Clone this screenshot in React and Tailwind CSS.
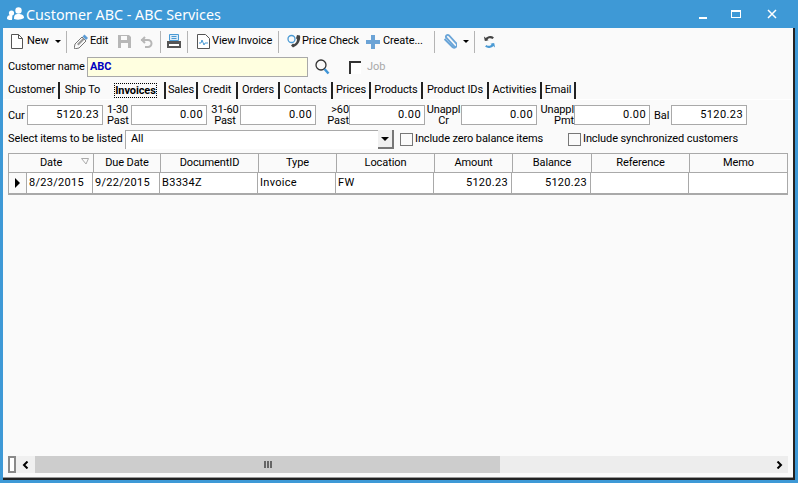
const columns = [
  { name: "Date", width: "w-[85px]" },
  { name: "Due Date", width: "w-[67px]" },
  { name: "DocumentID", width: "w-[98px]" },
  { name: "Type", width: "w-[78px]" },
  { name: "Location", width: "w-[98px]" },
  { name: "Amount", width: "w-[78px]" },
  { name: "Balance", width: "w-[79px]" },
  { name: "Reference", width: "w-[98px]" },
  { name: "Memo", width: "flex-1" },
];

const tabs = [
  { name: "Customer", width: "w-[55px]" },
  { name: "Ship To", width: "w-[47px]", noSep: true },
  { name: "Invoices", width: "w-[59px]", active: true },
  { name: "Sales", width: "w-[32px]" },
  { name: "Credit", width: "w-[40px]" },
  { name: "Orders", width: "w-[42px]" },
  { name: "Contacts", width: "w-[53px]" },
  { name: "Prices", width: "w-[38px]" },
  { name: "Products", width: "w-[52px]" },
  { name: "Product IDs", width: "w-[66px]" },
  { name: "Activities", width: "w-[53px]" },
  { name: "Email", width: "w-[34px]" },
];

function Sep() {
  return <div className="h-[22px] w-px bg-[#b4b4b4]" />;
}

function Caret() {
  return <div className="h-0 w-0 border-x-[3px] border-t-[3px] border-x-transparent border-t-black" />;
}

function Amount({ label, value, labelWidth, gap, align = "text-right" }) {
  return (
    <>
      <div className={`${labelWidth} ${gap} ${align} shrink-0 leading-[11px]`}>{label}</div>
      <div className="flex h-[20px] w-[76px] shrink-0 items-center justify-end border border-[#a9a9a9] bg-white pr-[3px] tracking-[0.4px]">{value}</div>
    </>
  );
}

function Tab({ tab }) {
  return (
    <div className={`${tab.width} flex h-[17px] items-center justify-center border-r-2 ${tab.noSep ? "border-transparent" : "border-[#222]"} ${tab.active ? "font-bold" : ""}`}>
      <span className={tab.active ? "border border-dotted border-black leading-[13px]" : ""}>{tab.name}</span>
    </div>
  );
}

export default function App() {
  return (
    <div className="flex h-[483px] w-[798px] flex-col overflow-hidden whitespace-nowrap bg-[#3e99d6] font-['Roboto',sans-serif] text-[11px] tracking-[-0.1px] text-black">
      {/* title bar */}
      <div className="flex h-[28px] shrink-0 items-center pl-[7px] text-white">
        <svg width="18" height="14" viewBox="0 0 18 14" fill="white">
          <circle cx="11.500" cy="3.500" r="3.200" />
          <path d="M7 12c0-4 1-5 4.500-5s5.500 1 5.500 4c-3 2-7 2-10 1z" />
          <circle cx="4.500" cy="6" r="2.600" />
          <path d="M0 12c0-3 1-4 4.500-4 1 0 1 1 .5 5-2 0-4 0-5-1z" />
        </svg>
        <div className="ml-[1px] mt-[2px] font-['Noto_Sans',sans-serif] text-[14.300px] tracking-normal">Customer ABC - ABC Services</div>
        <div className="ml-auto flex items-center">
          <div className="h-[2px] w-[8px] translate-y-[4px] bg-white" />
          <div className="ml-[24px] h-[8px] w-[10px] border border-t-2 border-white" />
          <svg className="ml-[25px] mr-[20px]" width="12" height="10" viewBox="0 0 12 10" fill="none" stroke="white" strokeWidth="1.500"><path d="M2 1l8 8M10 1L2 9" /></svg>
        </div>
      </div>

      <div className="mx-[3px] mb-[3px] flex flex-1 flex-col border-b-2 border-r-2 border-[#222] bg-[#fafafa]">
        {/* toolbar */}
        <div className="flex h-[27px] shrink-0 items-center pl-[8px]">
          <svg width="12" height="15" viewBox="0 0 12 15" fill="none" stroke="#555"><path d="M.5.500h7l4 4v10h-11z" fill="white" /><path d="M7.500.5v4h4" /></svg>
          <span className="ml-[4px] w-[22px]">New</span>
          <div className="ml-[6px]"><Caret /></div>
          <div className="ml-[5px]"><Sep /></div>
          <svg className="ml-[7px]" width="14" height="15" viewBox="0 0 14 15"><path d="M0 15l1-5 7-7 4 4-7 7z" fill="#fafafa" stroke="#777" /><path d="M3 10l6-6 1.500 1.500-6 6z" fill="#999" /><path d="M8.500 2.500l2-2 3.500 3.500-2 2z" fill="#5b9bd5" /></svg>
          <span className="ml-[2px] w-[19px]">Edit</span>
          <svg className="ml-[9px]" width="13" height="13" viewBox="0 0 13 13"><path d="M0 0h11l2 2v11H0z" fill="#b7b7b7" /><path d="M3 1h6v4H3zM3 8h7v5H3z" fill="#fafafa" /></svg>
          <svg className="ml-[9px]" width="13" height="12" viewBox="0 0 13 12" fill="none" stroke="#b7b7b7" strokeWidth="2"><path d="M1 4h7a3.500 3.500 0 010 7H5" /><path d="M5 1L2 4l3 3" /></svg>
          <div className="ml-[7px]"><Sep /></div>
          <svg className="ml-[6px]" width="14" height="15" viewBox="0 0 14 15"><path d="M2.500.500h9v6h-9z" fill="#dcecf8" stroke="#4a9ad4" /><path d="M4.500 2h5v1h-5zM4.500 4h5v1h-5z" fill="#4a9ad4" /><path d="M0 7h14v7H0z" fill="#555" /><path d="M2 10h10v2H2z" fill="white" /></svg>
          <div className="ml-[6px]"><Sep /></div>
          <svg className="ml-[9px]" width="13" height="15" viewBox="0 0 13 15" fill="none" stroke="#555"><path d="M.5.500h8l4 4v10h-12z" fill="white" /><path d="M2 9h2l1-3 2 5 1-2h3" stroke="#4a9ad4" /></svg>
          <span className="ml-[2px] w-[60px]">View Invoice</span>
          <div className="ml-[6px]"><Sep /></div>
          <svg className="ml-[8px]" width="15" height="15" viewBox="0 0 15 15" fill="none"><circle cx="4.500" cy="5" r="3.500" stroke="#4a9ad4" strokeWidth="1.300" /><path d="M10 1l3 .5c1 5-2 10-7 12l-2-2 2-2 1 .8c2-1 3-3 3-5l-1-1z" fill="#444" /></svg>
          <span className="w-[57px]">Price Check</span>
          <svg className="ml-[7px]" width="14" height="14" viewBox="0 0 14 14"><path d="M5 0h4v5h5v4H9v5H5V9H0V5h5z" fill="#6ba3d6" /></svg>
          <span className="ml-[3px] w-[45px]">Create...</span>
          <div className="ml-[6px]"><Sep /></div>
          <svg className="ml-[8px]" width="14" height="15" viewBox="0 0 14 15" fill="none" stroke="#6aa5d8" strokeWidth="1.800"><path d="M12 13L3.500 4a1.700 1.700 0 012.500-2.500l7 7.500a2.500 2.500 0 01-3.500 4L1.500 5" /></svg>
          <div className="ml-[6px]"><Caret /></div>
          <div className="ml-[5px]"><Sep /></div>
          <svg className="ml-[8px]" width="13" height="14" viewBox="0 0 14 14" fill="none" strokeWidth="2.400"><path d="M11 3a5 5 0 00-8 2" stroke="#444" /><path d="M3 11a5 5 0 008-2" stroke="#4a9ad4" /><path d="M1 1l1 5 4-1z" fill="#444" stroke="none" /><path d="M13 13l-1-5-4 1z" fill="#4a9ad4" stroke="none" /></svg>
        </div>

        {/* customer name */}
        <div className="flex h-[24px] shrink-0 items-center pl-[5px]">
          <span className="w-[79px]">Customer name</span>
          <div className="flex h-[20px] w-[221px] items-center border border-[#a9a9a9] bg-[#ffffe0] pl-[2px] font-bold text-[#0000c0]">ABC</div>
          <svg className="ml-[7px]" width="15" height="16" viewBox="0 0 15 16" fill="none"><circle cx="6" cy="6" r="5" stroke="#333" strokeWidth="1.300" /><path d="M9.500 10l4 4.500" stroke="#3f94d6" strokeWidth="2.500" /></svg>
          <div className="ml-[19px] h-[13px] w-[12px] border-l-2 border-t-2 border-[#333] bg-white" />
          <span className="ml-[6px] text-[#a8a8a8]">Job</span>
        </div>

        {/* tabs */}
        <div className="flex h-[21px] shrink-0 items-end border-b border-white pl-[2px]">
          {tabs.map((t) => <Tab key={t.name} tab={t} />)}
        </div>

        {/* amounts */}
        <div className="flex h-[30px] shrink-0 items-center pl-[5px]">
          <Amount label="Cur" value="5120.23" labelWidth="w-[19px]" align="text-left" />
          <Amount label={<>1-30<br />Past</>} value="0.00" labelWidth="w-[24px]" gap="ml-[4px]" align="text-left" />
          <Amount label={<>31-60<br />Past</>} value="0.00" labelWidth="w-[30px]" gap="ml-[3px]" align="text-center" />
          <Amount label={<>&gt;60<br />Past</>} value="0.00" labelWidth="w-[24px]" gap="ml-[9px]" />
          <Amount label={<>Unappl<br />Cr</>} value="0.00" labelWidth="w-[35px]" gap="ml-[1px]" align="text-center" />
          <Amount label={<>Unappl<br />Pmt</>} value="0.00" labelWidth="w-[36px]" gap="ml-[1px]" />
          <Amount label="Bal" value="5120.23" labelWidth="w-[17px]" gap="ml-[4px]" align="text-left" />
        </div>

        {/* list filter */}
        <div className="flex h-[18px] shrink-0 items-center pl-[5px]">
          <span className="w-[117px]">Select items to be listed</span>
          <div className="flex h-[19px] w-[269px] items-center justify-between border-l border-t border-[#a9a9a9] bg-white pl-[5px]">
            <span>All</span>
            <div className="flex h-[19px] w-[16px] items-center justify-center border-b-2 border-r-2 border-[#777] bg-[#f0f0f0]">
              <div className="h-0 w-0 border-x-[4px] border-t-[4px] border-x-transparent border-t-black" />
            </div>
          </div>
          <div className="ml-[6px] h-[13px] w-[13px] border border-[#777] bg-[#fafafa]" />
          <span className="ml-[2px] w-[153px]">Include zero balance items</span>
          <div className="h-[13px] w-[13px] border border-[#777] bg-[#fafafa]" />
          <span className="ml-[2px]">Include synchronized customers</span>
        </div>

        {/* grid */}
        <div className="mx-[5px] mt-[5px] flex flex-1 flex-col">
          <div className="flex h-[20px] shrink-0 border border-[#a9a9a9] bg-[#fafafa]">
            {columns.map((c, i) => (
              <div key={c.name} className={`${c.width} relative flex items-center justify-center ${i < 8 ? "border-r border-[#a9a9a9]" : ""}`}>
                {c.name}
                {c.name === "Date" && (
                  <svg className="absolute right-[4px] top-[4px]" width="8" height="7" viewBox="0 0 8 7" fill="none" stroke="#aaa"><path d="M.5.500h7L5 6z" /></svg>
                )}
              </div>
            ))}
          </div>
          <div className="flex h-[22px] shrink-0 border-x border-b-2 border-[#a9a9a9] bg-white tracking-[0.3px]">
            <div className="flex w-[18px] items-center justify-center border-r border-[#a9a9a9] bg-[#fafafa]">
              <div className="h-0 w-0 border-y-[5px] border-l-[5px] border-y-transparent border-l-black" />
            </div>
            <div className="flex w-[66px] items-center border-r border-[#a9a9a9] pl-[2px]">8/23/2015</div>
            <div className="flex w-[67px] items-center border-r border-[#a9a9a9] pl-[2px]">9/22/2015</div>
            <div className="flex w-[98px] items-center border-r border-[#a9a9a9] pl-[2px]">B3334Z</div>
            <div className="flex w-[78px] items-center border-r border-[#a9a9a9] pl-[2px]">Invoice</div>
            <div className="flex w-[98px] items-center border-r border-[#a9a9a9] pl-[2px]">FW</div>
            <div className="flex w-[78px] items-center justify-end border-r border-[#a9a9a9] pr-[3px]">5120.23</div>
            <div className="flex w-[79px] items-center justify-end border-r border-[#a9a9a9] pr-[3px]">5120.23</div>
            <div className="w-[98px] border-r border-[#a9a9a9]" />
            <div className="flex-1" />
          </div>
          <div className="flex-1" />
          <div className="flex h-[17px] shrink-0 items-stretch">
            <div className="h-[17px] w-[8px] border-2 border-[#8a8a8a] bg-white" />
            <div className="flex w-[19px] items-center justify-center bg-[#f0f0f0]">
              <svg width="7" height="8" viewBox="0 0 7 8" fill="none" stroke="black" strokeWidth="2"><path d="M5.500 .5L2 4l3.500 3.500" /></svg>
            </div>
            <div className="flex w-[465px] items-center justify-center bg-[#cdcdcd]">
              <div className="flex gap-px">
                <div className="h-[7px] w-[2px] bg-[#666]" />
                <div className="h-[7px] w-[2px] bg-[#666]" />
                <div className="h-[7px] w-[2px] bg-[#666]" />
              </div>
            </div>
            <div className="flex flex-1 items-center justify-end bg-[#ededed] pr-[5px]">
              <svg width="7" height="8" viewBox="0 0 7 8" fill="none" stroke="black" strokeWidth="2"><path d="M1.500 .5L5 4 1.500 7.500" /></svg>
            </div>
          </div>
          <div className="h-[4px] shrink-0" />
        </div>
        <div className="h-px shrink-0 bg-[#999]" />
      </div>
    </div>
  );
}
